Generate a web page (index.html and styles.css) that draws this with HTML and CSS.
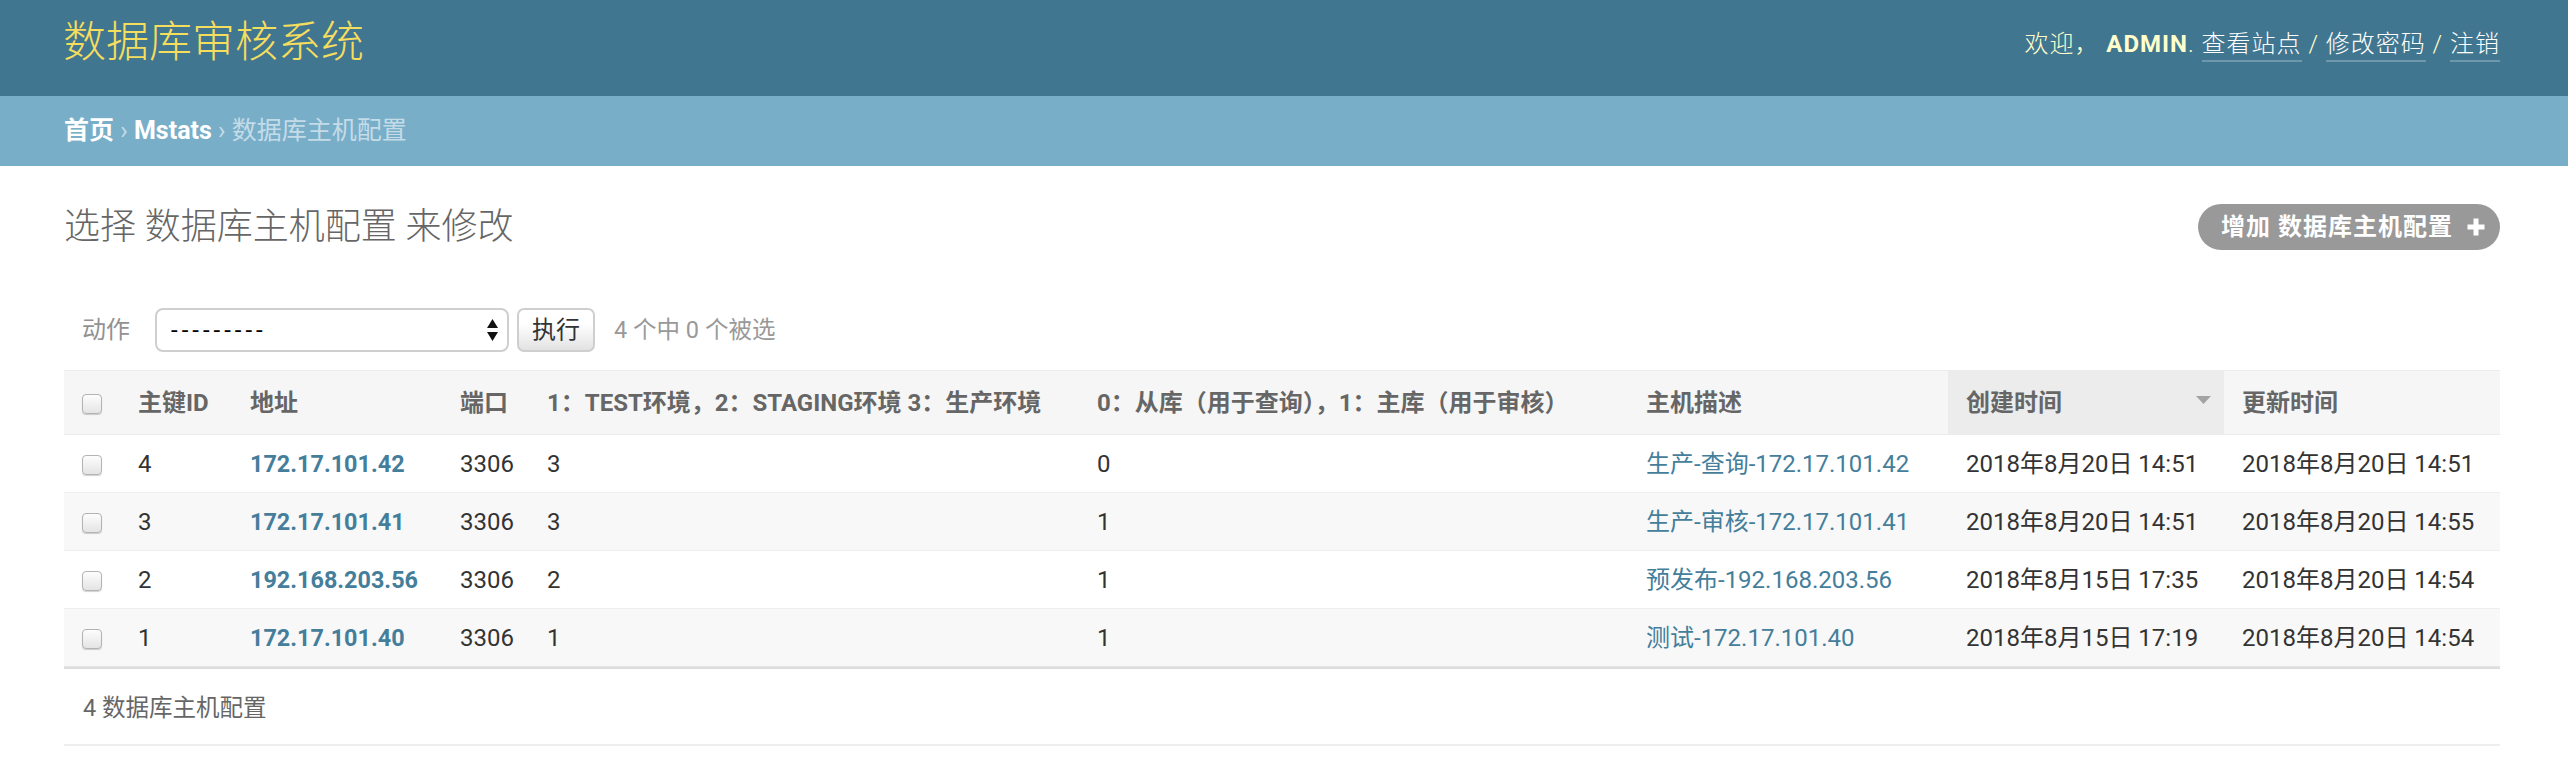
FILE: index.html
```html
<!DOCTYPE html>
<html lang="zh-CN">
<head>
<meta charset="utf-8">
<title>选择 数据库主机配置 来修改 | 数据库审核系统</title>
<link rel="stylesheet" href="styles.css">
</head>
<body>
<header class="site-header">
  <h1 class="brand">数据库审核系统</h1>
  <div class="user-tools">欢迎， <strong>admin</strong>. <a href="#">查看站点</a> / <a href="#">修改密码</a> / <a href="#">注销</a></div>
</header>
<nav class="breadcrumbs"><a href="#">首页</a> › <a href="#">Mstats</a> › 数据库主机配置</nav>
<main class="content">
  <div class="content-head">
    <h1 class="page-title">选择 数据库主机配置 来修改</h1>
    <a class="addlink" href="#">增加 数据库主机配置<svg class="plus" width="20" height="20" viewBox="0 0 20 20"><path d="M10 1.5v17M1.5 10h17" stroke="#fff" stroke-width="5" fill="none"/></svg></a>
  </div>
  <form class="changelist">
    <div class="actions">
      <label for="action">动作</label>
      <div class="select-wrap">
        <select id="action"><option>---------</option></select>
        <svg class="select-arrows" width="11" height="22" viewBox="0 0 11 22"><path d="M0 9L5.5 0L11 9z M0 13L5.5 22L11 13z" fill="#111"/></svg>
      </div>
      <button class="button" type="button">执行</button>
      <span class="counter">4 个中 0 个被选</span>
    </div>
    <table class="results">
      <colgroup>
        <col class="c-check"><col class="c-id"><col class="c-addr"><col class="c-port"><col class="c-env"><col class="c-role"><col class="c-desc"><col class="c-time"><col class="c-time">
      </colgroup>
      <thead>
        <tr>
          <th class="check"><input type="checkbox" class="cb"></th>
          <th>主键ID</th>
          <th>地址</th>
          <th>端口</th>
          <th>1：TEST环境，2：STAGING环境 3：生产环境</th>
          <th>0：从库（用于查询），1：主库（用于审核）</th>
          <th>主机描述</th>
          <th class="sorted"><div class="sort-head"><span>创建时间</span><svg class="sort-icon" width="15" height="8" viewBox="0 0 15 8"><path d="M0 0h15L7.5 8z" fill="#a3a3a3"/></svg></div></th>
          <th>更新时间</th>
        </tr>
      </thead>
      <tbody>
        <tr>
          <td class="check"><input type="checkbox" class="cb"></td>
          <td>4</td>
          <th><a href="#">172.17.101.42</a></th>
          <td>3306</td>
          <td>3</td>
          <td>0</td>
          <td><a href="#" class="plain">生产-查询-172.17.101.42</a></td>
          <td>2018年8月20日 14:51</td>
          <td>2018年8月20日 14:51</td>
        </tr>
        <tr>
          <td class="check"><input type="checkbox" class="cb"></td>
          <td>3</td>
          <th><a href="#">172.17.101.41</a></th>
          <td>3306</td>
          <td>3</td>
          <td>1</td>
          <td><a href="#" class="plain">生产-审核-172.17.101.41</a></td>
          <td>2018年8月20日 14:51</td>
          <td>2018年8月20日 14:55</td>
        </tr>
        <tr>
          <td class="check"><input type="checkbox" class="cb"></td>
          <td>2</td>
          <th><a href="#">192.168.203.56</a></th>
          <td>3306</td>
          <td>2</td>
          <td>1</td>
          <td><a href="#" class="plain">预发布-192.168.203.56</a></td>
          <td>2018年8月15日 17:35</td>
          <td>2018年8月20日 14:54</td>
        </tr>
        <tr>
          <td class="check"><input type="checkbox" class="cb"></td>
          <td>1</td>
          <th><a href="#">172.17.101.40</a></th>
          <td>3306</td>
          <td>1</td>
          <td>1</td>
          <td><a href="#" class="plain">测试-172.17.101.40</a></td>
          <td>2018年8月15日 17:19</td>
          <td>2018年8月20日 14:54</td>
        </tr>
      </tbody>
    </table>
    <p class="paginator">4 数据库主机配置</p>
  </form>
</main>
</body>
</html>
```
FILE: styles.css
```css
* { box-sizing: border-box; }
html, body { margin: 0; padding: 0; }
body {
  font-family: Roboto, "Noto Sans CJK SC", sans-serif;
  color: #333;
  background: #fff;
  font-size: 23px;
}
a { color: #447e9b; text-decoration: none; }

/* header */
.site-header {
  height: 96px;
  padding: 0 68px 12px 63px;
  background: #417690;
  color: #ffc;
  display: flex;
  align-items: center;
  justify-content: space-between;
}
.brand {
  margin: 0;
  font-size: 43px;
  line-height: 50px;
  font-weight: 300;
  color: #f5dd5d;
}
.user-tools {
  margin-top: 4px;
  font-size: 24px;
  line-height: 30px;
  letter-spacing: 1px;
  text-transform: uppercase;
  font-weight: 300;
  white-space: nowrap;
}
.user-tools strong { font-weight: 700; }
.user-tools a {
  color: #fff;
  padding-bottom: 2px;
  border-bottom: 2px solid rgba(255, 255, 255, 0.25);
}

/* breadcrumbs */
.breadcrumbs {
  padding: 20px 64px;
  line-height: 30px;
  font-size: 25px;
  background: #79aec8;
  color: #c4dce8;
  white-space: nowrap;
}
.breadcrumbs a { color: #fff; font-weight: 700; }

/* content */
.content { padding: 38px 68px 0 64px; }
.content-head {
  display: flex;
  justify-content: space-between;
  align-items: center;
  height: 46px;
}
.page-title {
  margin: 0;
  font-size: 36px;
  line-height: 46px;
  font-weight: 300;
  color: #666;
}
.addlink {
  display: flex;
  align-items: center;
  gap: 13px;
  height: 46px;
  padding: 0 14px 0 23px;
  border-radius: 23px;
  background: #999;
  color: #fff;
  font-size: 24px;
  line-height: 30px;
  font-weight: 700;
  letter-spacing: 1px;
}

/* actions */
.actions {
  display: flex;
  align-items: center;
  height: 44px;
  margin-top: 58px;
  padding-left: 18px;
  color: #999;
}
.actions label {
  font-size: 24px;
  line-height: 30px;
  margin-right: 25px;
  color: #929292;
}
.select-wrap {
  position: relative;
  width: 354px;
  height: 44px;
  margin-right: 8px;
}
.select-wrap select {
  appearance: none;
  -webkit-appearance: none;
  width: 100%;
  height: 100%;
  margin: 0;
  padding: 0 0 0 14px;
  border: 2px solid #cfcfcf;
  border-radius: 8px;
  background: #fff;
  color: #000;
  font-family: Roboto, "Noto Sans CJK SC", sans-serif;
  font-size: 24px;
  letter-spacing: 4px;
}
.select-arrows {
  position: absolute;
  right: 11px;
  top: 11px;
  pointer-events: none;
}
.button {
  width: 78px;
  height: 44px;
  margin: 0;
  padding: 0;
  border: 2px solid #cfcfcf;
  border-radius: 7px;
  background: linear-gradient(#ffffff 35%, #e2e2e2);
  color: #333;
  font-family: Roboto, "Noto Sans CJK SC", sans-serif;
  font-size: 24px;
  line-height: 30px;
}
.counter {
  margin-left: 19px;
  font-size: 23.5px;
  line-height: 30px;
  color: #999;
}

/* table */
.results {
  width: 100%;
  margin-top: 18px;
  border-collapse: separate;
  border-spacing: 0;
  table-layout: fixed;
}
.c-check { width: 56px; }
.c-id { width: 112px; }
.c-addr { width: 210px; }
.c-port { width: 87px; }
.c-env { width: 550px; }
.c-role { width: 549px; }
.c-desc { width: 320px; }
.c-time { width: 276px; }

.results th,
.results td {
  padding: 0 18px;
  text-align: left;
  vertical-align: middle;
  white-space: nowrap;
  line-height: 28px;
}
.results thead th {
  height: 65px;
  background: #f6f6f6;
  border-top: 1px solid #ececec;
  border-bottom: 1px solid #ececec;
  color: #666;
  font-size: 24px;
  font-weight: 700;
  text-transform: uppercase;
}
.results thead th.sorted { background: #ececec; padding-right: 13px; }
.sort-head {
  display: flex;
  align-items: center;
  justify-content: space-between;
}
.sort-icon { margin-bottom: 6px; }

.results tbody td,
.results tbody th {
  height: 58px;
  border-bottom: 1px solid #eee;
  font-size: 24px;
  font-weight: 400;
}
.results tbody th { font-weight: 700; }
.results tbody th a { font-weight: 700; font-size: 23.4px; }
.results tbody tr:nth-child(even) { background: #f8f8f8; }
.results .check { padding: 0; text-align: center; }
.results tbody tr:last-child td,
.results tbody tr:last-child th { border-bottom: 1px solid #e4e4e4; }

.cb {
  appearance: none;
  -webkit-appearance: none;
  display: inline-block;
  width: 20px;
  height: 20px;
  margin: 0;
  vertical-align: middle;
  border: 1px solid #b3b3b3;
  border-radius: 4px;
  background: linear-gradient(#fdfdfd, #e4e4e4);
  box-shadow: 0 1px 1px rgba(0, 0, 0, 0.18);
}

.paginator {
  margin: 0;
  height: 79px;
  padding: 0 19px;
  border-top: 2px solid #dddddd;
  border-bottom: 2px solid #eeeeee;
  color: #666;
  font-size: 23.5px;
  line-height: 78px;
}
```
